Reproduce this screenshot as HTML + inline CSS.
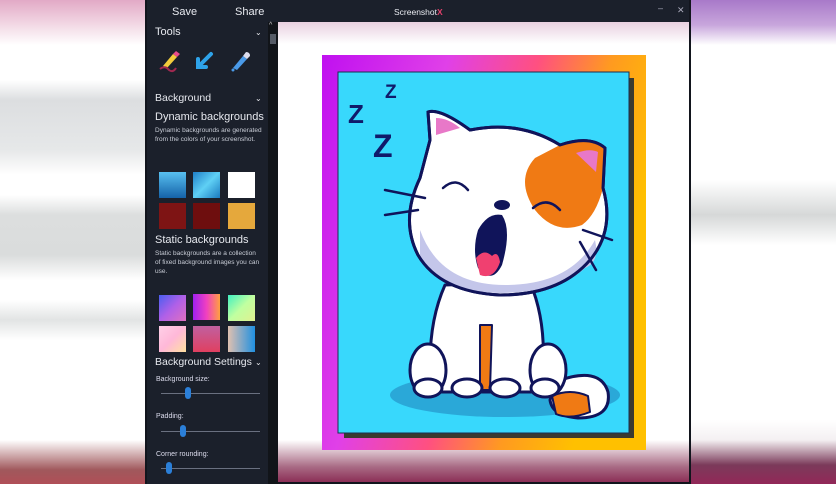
<!DOCTYPE html>
<html><head><meta charset="utf-8"><style>
*{margin:0;padding:0;box-sizing:border-box}
body{width:836px;height:484px;overflow:hidden;position:relative;font-family:"Liberation Sans",sans-serif;background:#fff}
.abs{position:absolute}
.side{left:147px;top:22px;width:121px;height:462px;background:#1b202b;color:#e6e8ee}
.t{position:absolute;white-space:nowrap}
.sw{position:absolute;width:27px;height:26px}
.slider{position:absolute;left:14px;width:99px;height:1px;background:#6a7080}
.knob{position:absolute;width:6px;height:12px;border-radius:3px;background:#2b7fd8;top:-6px}
</style></head><body>
<div class="abs" style="left:0;top:0;width:147px;height:484px;background:linear-gradient(#e2a9c6 0,#f3dbe6 26px,#fff 45px,#fff 80px,#dcdee0 100px,#e6e8e9 150px,#fff 175px,#fff 195px,#dcdede 215px,#dadcdc 255px,#fff 280px,#fff 300px,#e2e4e4 320px,#fff 340px,#fff 420px,#fff 440px,#a0585c 470px,#b04f57 484px)"></div>
<div class="abs" style="left:691px;top:0;width:145px;height:484px;background:linear-gradient(#a879c9 0,#c8a6dc 25px,#fff 45px,#fff 180px,#d6d8d8 215px,#fff 245px,#fff 420px,#f4f0f2 440px,#7b3a5a 465px,#922858 484px)"></div>
<div class="abs" style="left:145px;top:0;width:546px;height:484px;background:#12151d"></div>
<div class="abs" style="left:147px;top:0;width:542px;height:22px;background:#1b202b"></div>
<div class="t" style="left:172px;top:6px;font-size:11px;color:#e8eaf0">Save</div>
<div class="t" style="left:235px;top:6px;font-size:11px;color:#e8eaf0">Share</div>
<div class="t" style="left:394px;top:7px;font-size:8.5px;color:#e8eaf0">Screenshot<span style="color:#e0406a;font-weight:bold">X</span></div>
<div class="t" style="left:658px;top:3px;font-size:9px;color:#aab">–</div>
<div class="t" style="left:677px;top:5px;font-size:9px;color:#aab">✕</div>
<div class="side abs">
 <div class="t" style="left:8px;top:4px;font-size:11px">Tools</div>
 <div class="t" style="left:108px;top:6px;font-size:8px">⌄</div>
 <svg class="abs" style="left:10px;top:26px" width="110" height="26" viewBox="0 0 110 26">
  <path d="M6 18 L16 6 L20 9 L10 20 Z" fill="#f2cc3c"/><path d="M16 6 L19 3 L23 6 L20 9Z" fill="#e84b8a"/>
  <path d="M3 21 Q8 17 12 22 Q16 25 19 20" stroke="#a02850" stroke-width="2" fill="none"/>
  <path d="M54 6 L42 18 M41 11 L41 19 L49 19" stroke="#2ea3ea" stroke-width="4" fill="none" stroke-linecap="round"/>
  <path d="M76 20 L86 8 L90 11 L80 22 Z" fill="#4a9ae8"/><path d="M86 8 L89 4 Q93 4 93 8 L90 11Z" fill="#dde"/><circle cx="76" cy="22" r="1.5" fill="#4a9ae8"/>
 </svg>
 <div class="t" style="left:8px;top:70px;font-size:10.5px">Background</div>
 <div class="t" style="left:108px;top:72px;font-size:8px">⌄</div>
 <div class="t" style="left:8px;top:89px;font-size:11px">Dynamic backgrounds</div>
 <div class="t" style="left:8px;top:104px;font-size:6.5px;line-height:9px;color:#c8ccd6">Dynamic backgrounds are generated<br>from the colors of your screenshot.</div>
 <div class="sw" style="left:12px;top:150px;background:linear-gradient(#58c0f0,#1562a8)"></div>
 <div class="sw" style="left:46px;top:150px;background:linear-gradient(135deg,#1f7fc8,#5fd0f5 50%,#1a7ac0)"></div>
 <div class="sw" style="left:81px;top:150px;background:#fff"></div>
 <div class="sw" style="left:12px;top:181px;background:#7e1414"></div>
 <div class="sw" style="left:46px;top:181px;background:#6e0e0e"></div>
 <div class="sw" style="left:81px;top:181px;background:#e5a83c"></div>
 <div class="t" style="left:8px;top:212px;font-size:11px">Static backgrounds</div>
 <div class="t" style="left:8px;top:227px;font-size:6.5px;line-height:9px;color:#c8ccd6">Static backgrounds are a collection<br>of fixed background images you can<br>use.</div>
 <div class="sw" style="left:12px;top:273px;background:linear-gradient(135deg,#4a5ef0,#b060e8,#e070c0)"></div>
 <div class="sw" style="left:46px;top:272px;background:linear-gradient(90deg,#a020f0,#f040c0,#ffa040)"></div>
 <div class="sw" style="left:81px;top:273px;background:linear-gradient(135deg,#40f0c0,#c0ffa0,#e0f090)"></div>
 <div class="sw" style="left:12px;top:304px;background:linear-gradient(135deg,#ffd0e8,#ffb8d8,#ffe0a0)"></div>
 <div class="sw" style="left:46px;top:304px;background:linear-gradient(#c060a0,#e04060)"></div>
 <div class="sw" style="left:81px;top:304px;background:linear-gradient(90deg,#e0c0b0,#2090e0)"></div>
 <div class="t" style="left:8px;top:334px;font-size:10.5px">Background Settings</div>
 <div class="t" style="left:108px;top:336px;font-size:8px">⌄</div>
 <div class="t" style="left:9px;top:354px;font-size:7px;color:#dde">Background size:</div>
 <div class="slider" style="top:371px"><div class="knob" style="left:24px"></div></div>
 <div class="t" style="left:9px;top:391px;font-size:7px;color:#dde">Padding:</div>
 <div class="slider" style="top:409px"><div class="knob" style="left:19px"></div></div>
 <div class="t" style="left:9px;top:429px;font-size:7px;color:#dde">Corner rounding:</div>
 <div class="slider" style="top:446px"><div class="knob" style="left:5px"></div></div>
</div>
<div class="abs" style="left:268px;top:22px;width:10px;height:462px;background:#111419"></div>
<div class="abs" style="left:270px;top:34px;width:6px;height:10px;background:#555b66"></div>
<div class="t" style="left:269px;top:22px;font-size:7px;color:#ccc">^</div>
<div class="abs" style="left:278px;top:22px;width:411px;height:460px;background:linear-gradient(#e8d0e0 0,#fff 22px,#fff 418px,#a86a84 445px,#8c2f56 460px)"></div>
<svg class="abs" style="left:0;top:0" width="836" height="484" viewBox="0 0 836 484">
 <defs>
  <linearGradient id="fr" x1="0" y1="0" x2="1" y2="0.35">
   <stop offset="0" stop-color="#c010f0"/><stop offset="0.35" stop-color="#e040e8"/><stop offset="0.6" stop-color="#ff5080"/><stop offset="0.8" stop-color="#ff9a20"/><stop offset="1" stop-color="#ffc000"/>
  </linearGradient>
 </defs>
 <rect x="322" y="55" width="324" height="395" fill="url(#fr)"/>
 <rect x="344" y="78" width="290" height="360" fill="#3a3a30"/>
 <rect x="338" y="72" width="291" height="361" fill="#38d8fc" stroke="#1a3050" stroke-width="1"/>
 <g fill="#101a6a" font-family="Liberation Sans" font-weight="bold">
  <text x="348" y="123" font-size="26">Z</text>
  <text x="385" y="98" font-size="19">Z</text>
  <text x="373" y="157" font-size="32">Z</text>
 </g>
 <ellipse cx="505" cy="395" rx="115" ry="22" fill="#2aa8d8"/>
 <g stroke="#10145a" stroke-width="3" stroke-linejoin="round">
  <path d="M555 382 Q600 365 608 392 Q612 418 578 418 Q552 416 550 400Z" fill="#fff"/>
  <path d="M552 396 Q570 388 588 396 L590 412 Q570 420 556 414Z" fill="#f07a14" stroke-width="2"/>
  <path d="M445 285 Q425 330 432 392 L540 392 Q550 330 530 282Z" fill="#fff"/>
  <ellipse cx="428" cy="370" rx="18" ry="26" fill="#fff"/>
  <ellipse cx="548" cy="370" rx="18" ry="26" fill="#fff"/>
  <path d="M480 325 L492 325 L490 390 L480 390Z" fill="#f07a14" stroke-width="2"/>
  <ellipse cx="428" cy="388" rx="14" ry="9" fill="#fff"/>
  <ellipse cx="467" cy="388" rx="15" ry="9" fill="#fff"/>
  <ellipse cx="505" cy="388" rx="15" ry="9" fill="#fff"/>
  <ellipse cx="545" cy="388" rx="14" ry="9" fill="#fff"/>
  <path d="M430 140 L428 112 Q440 108 470 130 Q520 120 560 145 Q590 135 605 148 L603 188 Q615 230 590 260 Q560 295 500 295 Q440 292 418 255 Q400 220 420 178Z" fill="#fff"/>
 </g>
 <path d="M560 145 Q590 135 605 148 L603 188 Q596 215 582 225 Q555 235 535 210 Q515 180 535 158Z" fill="#f07a14"/>
 <path d="M420 230 Q440 285 505 285 Q570 285 595 240 Q600 262 585 268 Q560 292 500 293 Q440 292 420 255Z" fill="#c4c6ea"/>
 <path d="M430 140 L428 112 Q440 108 470 130 Q520 120 560 145 Q590 135 605 148 L603 188 Q615 230 590 260 Q560 295 500 295 Q440 292 418 255 Q400 220 420 178Z" fill="none" stroke="#10145a" stroke-width="3"/>
 <path d="M436 135 L436 118 Q448 118 460 128Z" fill="#e878c8"/>
 <path d="M576 153 Q590 148 598 152 L596 172Z" fill="#e878c8"/>
 <g stroke="#10145a" stroke-width="2.5" fill="none" stroke-linecap="round">
  <path d="M443 188 Q456 176 468 190"/><path d="M533 208 Q547 196 560 210"/>
  <path d="M385 190 L425 198 M385 215 L418 210 M583 230 L612 240 M580 242 L596 270"/>
 </g>
 <ellipse cx="502" cy="205" rx="8" ry="5" fill="#10145a"/>
 <path d="M478 230 Q488 212 502 215 Q512 230 502 265 Q492 285 478 268 Q472 250 478 230Z" fill="#10145a"/>
 <path d="M476 258 Q484 248 492 256 Q498 250 500 262 Q494 280 480 275Z" fill="#f04070"/>
</svg>
</body></html>
